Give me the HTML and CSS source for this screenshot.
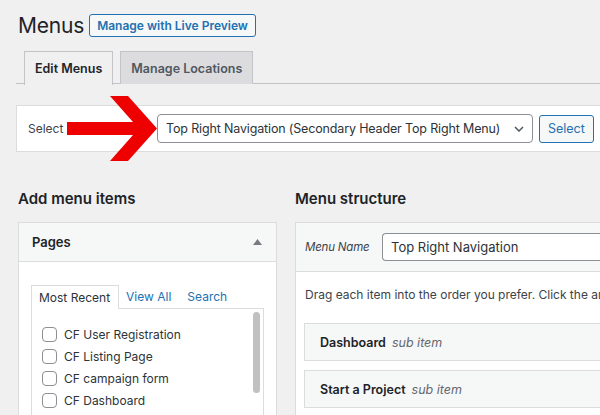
FILE: index.html
```html
<!DOCTYPE html>
<html>
<head>
<meta charset="utf-8">
<link rel="stylesheet" href="styles.css">
</head>
<body>
<div class="wrap">
  <div class="title-row">
    <h1 class="title">Menus</h1>
    <a class="btn-outline">Manage with Live Preview</a>
  </div>
  <nav class="tabs">
    <span class="tab active">Edit Menus</span>
    <span class="tab">Manage Locations</span>
  </nav>

  <div class="select-panel">
    <span class="select-label">Select</span>
    <div class="dropdown">
      <span>Top Right Navigation (Secondary Header Top Right Menu)</span>
      <svg class="chev" width="10" height="6" viewBox="0 0 10 6"><path d="M1 1l4 4 4-4" fill="none" stroke="#50575e" stroke-width="1.5"/></svg>
    </div>
    <span class="btn-secondary">Select</span>
  </div>

  <div class="columns">
    <div class="col-left">
      <h2 class="section-title">Add menu items</h2>
      <div class="acc">
        <div class="acc-head">
          <span>Pages</span>
          <svg width="9" height="6" viewBox="0 0 9 6"><path d="M0 6L4.5 0 9 6z" fill="#787c82"/></svg>
        </div>
        <div class="acc-body">
          <div class="mini-tabs">
            <span class="mini-tab active">Most Recent</span>
            <span class="mini-tab link">View All</span>
            <span class="mini-tab link">Search</span>
          </div>
          <div class="tab-panel">
            <ul class="checklist">
              <li><span class="cb"></span>CF User Registration</li>
              <li><span class="cb"></span>CF Listing Page</li>
              <li><span class="cb"></span>CF campaign form</li>
              <li><span class="cb"></span>CF Dashboard</li>
              <li><span class="cb"></span>CF Profile</li>
            </ul>
            <div class="scroll-thumb"></div>
          </div>
        </div>
      </div>
    </div>

    <div class="col-right">
      <h2 class="section-title">Menu structure</h2>
      <div class="menu-box">
        <div class="menu-head">
          <span class="menu-name-label">Menu Name</span>
          <div class="name-input">Top Right Navigation</div>
        </div>
        <div class="menu-body">
          <p class="hint">Drag each item into the order you prefer. Click the arrow on the right of the item to reveal additional configuration options.</p>
          <div class="menu-item"><b>Dashboard</b><i>sub item</i></div>
          <div class="menu-item"><b>Start a Project</b><i>sub item</i></div>
        </div>
      </div>
    </div>
  </div>
</div>

<svg class="red-arrow" width="100" height="76" viewBox="0 0 100 76">
  <polygon points="7,32 73,32 50,6 68,6 97,38.5 68,71 50,71 73,45 7,45" fill="#ee0000"/>
</svg>
</body>
</html>
```

FILE: styles.css
```css
* { box-sizing: border-box; }
html, body { margin: 0; padding: 0; }
body {
  width: 600px;
  height: 415px;
  overflow: hidden;
  background: #f0f0f1;
  font-family: Inter, "Noto Sans", "Liberation Sans", sans-serif;
  color: #1d2327;
  font-size: 13px;
  position: relative;
  white-space: nowrap;
}
.wrap { padding: 14px 0 0 16px; }

.title-row { display: flex; align-items: center; gap: 5px; padding-left: 2px; height: 23px; }
.title { margin: 0; font-size: 21px; font-weight: 400; letter-spacing: -0.2px; line-height: 23px; }
.btn-outline {
  display: inline-flex; align-items: center;
  height: 23px; padding: 0 7px;
  border: 1px solid #2271b1; border-radius: 3px;
  color: #2271b1; font-size: 12px; font-weight: 600;
  background: #f6f7f7;
}

.tabs {
  display: flex; gap: 7px;
  margin-top: 14px; padding-left: 8px;
  border-bottom: 1px solid #c3c4c7;
  height: 33px;
}
.tab {
  display: flex; align-items: center;
  padding: 0 10px;
  border: 1px solid #c3c4c7; border-bottom: none;
  background: #dcdcde;
  color: #50575e;
  font-size: 12.5px; font-weight: 600;
  height: 33px;
}
.tab.active { background: #f0f0f1; color: #1d2327; height: 34px; margin-bottom: -1px; }

.select-panel {
  display: flex; align-items: center;
  margin-top: 21px;
  height: 47px;
  background: #fff;
  border: 1px solid #dcdcde; border-right: none;
  padding-left: 11px;
}
.select-label { font-size: 12px; color: #3c434a; width: 129px; flex: none; }
.dropdown {
  display: flex; align-items: center; justify-content: space-between;
  width: 376px; height: 29px; flex: none;
  border: 1px solid #8c8f94; border-radius: 4px;
  padding: 0 8px 0 8px;
  font-size: 12.5px; letter-spacing: -0.15px; color: #2c3338;
}
.chev { flex: none; }
.btn-secondary {
  display: flex; align-items: center;
  margin-left: 6px;
  height: 28px; padding: 0 8px;
  border: 1px solid #2271b1; border-radius: 3px;
  background: #f6f7f7; color: #2271b1; font-size: 12.5px;
}

.columns { display: flex; gap: 18px; padding-left: 2px; }
.col-left { width: 259px; flex: none; }
.col-right { flex: 1; }
.section-title { margin: 38px 0 14px; font-size: 15px; font-weight: 600; line-height: 18px; }

.acc { background: #fff; border: 1px solid #dcdcde; height: 300px; }
.acc-head {
  display: flex; align-items: center; justify-content: space-between;
  height: 39px; padding: 0 14px 0 13px;
  background: #f6f7f7;
  border-bottom: 1px solid #dcdcde;
  font-size: 13px; font-weight: 600;
}
.acc-body { padding: 23px 12px 0 12px; }
.mini-tabs { display: flex; align-items: flex-end; height: 23px; }
.mini-tab { height: 23px; display: flex; align-items: center; font-size: 12px; }
.mini-tab.active {
  border: 1px solid #dcdcde; border-bottom: none; background: #fff;
  color: #2c3338; padding: 0 8px 0 7px; height: 24px; margin-bottom: -1px; position: relative; z-index: 1;
}
.mini-tab.link { color: #2271b1; padding: 0 9px 0 7px; }
.tab-panel {
  position: relative;
  border: 1px solid #dcdcde;
  height: 200px;
  padding: 14px 0 0 10px;
}
.checklist { list-style: none; margin: 0; padding: 0; }
.checklist li { display: flex; align-items: center; height: 22px; font-size: 12px; color: #2c3338; }
.cb {
  width: 15px; height: 15px; border: 1px solid #8c8f94; border-radius: 4px;
  margin-right: 7px; background: #fff; flex: none;
}
.scroll-thumb {
  position: absolute; right: 3px; top: 3px;
  width: 7px; height: 81px; border-radius: 4px; background: #c1c1c1;
}

.menu-box { background: #fff; border: 1px solid #dcdcde; border-right: none; height: 300px; }
.menu-head {
  display: flex; align-items: center;
  height: 49px; padding-left: 9px;
  background: #f6f7f7; border-bottom: 1px solid #dcdcde;
}
.menu-name-label { font-style: italic; font-size: 11.5px; letter-spacing: -0.2px; color: #3c434a; width: 77px; flex: none; }
.name-input {
  flex: 1; height: 28px; display: flex; align-items: center;
  border: 1px solid #8c8f94; border-right: none; border-radius: 4px 0 0 4px;
  background: #fff; padding-left: 8px; font-size: 13px; color: #2c3338;
}
.menu-body { padding: 14px 0 0 8px; }
.hint { margin: 0 0 20px 1px; font-size: 12px; color: #3c434a; line-height: 17px; }
.menu-item {
  display: flex; align-items: center;
  height: 38px; margin-bottom: 9px;
  background: #f6f7f7; border: 1px solid #dcdcde; border-right: none;
  padding-left: 15px; font-size: 12.5px;
}
.menu-item b { font-weight: 600; }
.menu-item i { margin-left: 6px; color: #646970; }

.red-arrow { position: absolute; left: 60px; top: 90px; }
```
